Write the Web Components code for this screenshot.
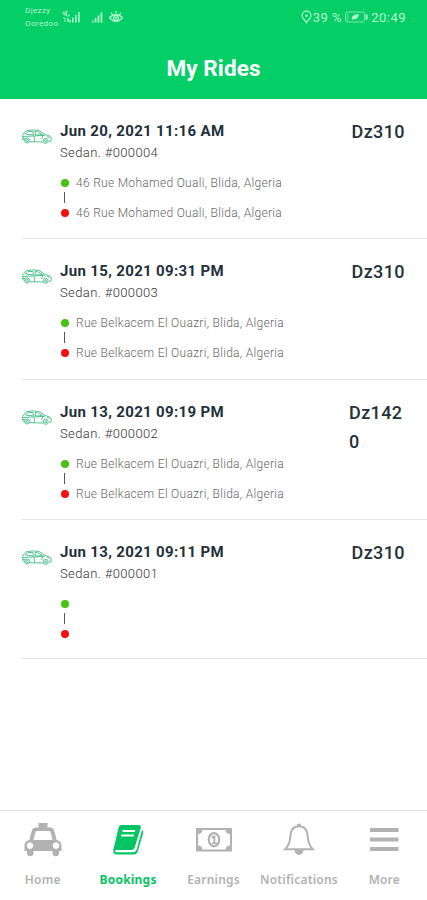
<!DOCTYPE html>
<html lang="en">
<head>
<meta charset="utf-8">
<title>My Rides</title>
<style>
  html, body { margin: 0; height: 100%; }
  body { background: #fff; font-family: Roboto, "Liberation Sans", sans-serif; }
</style>
</head>
<body>
<rides-app></rides-app>

<script>
function makeTemplate(html) {
  const template = document.createElement('template')
  template.innerHTML = html
  return template
}

const statusTemplate = makeTemplate(`
  <style>
    :host {
      display: flex;
      justify-content: space-between;
      height: 35px;
      box-sizing: border-box;
      padding: 4px 21px 0 25px;
      color: #b5f5ce;
    }
    .left, .right { display: flex; }
    .carriers { width: 36px; font-size: 8px; line-height: 13px; letter-spacing: 0.4px; white-space: nowrap; }
    .right { align-items: center; height: 26px; font-size: 13px; }
    .percent { margin-left: 1px; letter-spacing: 0.5px; }
    .time { letter-spacing: 0.5px; }
    .battery { margin: 0 3px 0 3px; }
    svg { display: block; }
  </style>
  <div class="left">
    <div class="carriers">Djezzy<br>Ooredoo</div>
    <svg width="64" height="26" viewBox="61 4 64 26" fill="currentColor">
      <path d="M63 11v3h3M65 11v5M68 11h-1.500v5H69v-2M63 18h2v4M67 18l2 4M69 18l-2 4" fill="none" stroke="currentColor" stroke-width=".8"/>
      <path d="M69 20h1.700v2.500H69zM72 17.500h1.700v5H72zM75 15h1.700v7.500H75zM78 12h1.700v10.500H78z" opacity=".9"/>
      <path d="M92 20.500h1.500v2H92zM94.700 18h1.700v4.500h-1.700zM97.500 15.500h1.800v7h-1.800zM100.500 12.500h1.800v10h-1.800z"/>
      <g fill="none" stroke="currentColor" stroke-width="1.200">
        <path d="M109.500 17.500Q116 11.500 122.500 17.500Q116 25.500 109.500 17.500zM111 12.500l1.300 2M116 11v2.500M121 12.500l-1.300 2"/>
        <circle cx="116" cy="18" r="2.300"/>
      </g>
      <circle cx="116" cy="18" r="1"/>
    </svg>
  </div>
  <div class="right">
    <svg width="11" height="14" viewBox="0 0 11 14" fill="none" stroke="currentColor" stroke-width="1.200">
      <path d="M5.500 12.500C4.500 10.500 1 8.500 1 5.700a4.500 4.500 0 0 1 9 0c0 2.800-3.500 4.800-4.500 6.800z"/>
      <circle cx="5.500" cy="5.700" r="1.200" fill="currentColor" stroke="none"/>
    </svg>
    <span class="percent">39 %</span>
    <svg class="battery" width="23" height="12" viewBox="0 0 23 12">
      <rect x=".6" y="1" width="18.800" height="10" rx="1.500" fill="none" stroke="currentColor" opacity=".7"/>
      <path d="M20.500 3.500h2v5h-2z" fill="currentColor"/>
      <path d="M2 2.500h1.500v7H2z" fill="currentColor" opacity=".4"/>
      <path d="M7 9c-1-4 2-5.500 7-6-.5 4-3 6-5.500 5z" fill="currentColor"/>
    </svg>
    <span class="time">20:49</span>
  </div>
`)

customElements.define('status-bar',

class extends HTMLElement {

  constructor () {
    super()
    this.attachShadow({ mode: 'open' })
    this.shadowRoot.appendChild(statusTemplate.content.cloneNode(true))
  }
})

const headerTemplate = makeTemplate(`
  <style>
    :host { display: block; height: 98.500px; background: #04ce66; color: #fff; }
    h1 {
      margin: 0;
      padding-top: 16px;
      font: 700 22.500px/34px Roboto, sans-serif;
      letter-spacing: 0.1px;
      text-align: center;
    }
  </style>
  <status-bar></status-bar>
  <h1><slot></slot></h1>
`)

customElements.define('app-header',

class extends HTMLElement {

  constructor () {
    super()
    this.attachShadow({ mode: 'open' })
    this.shadowRoot.appendChild(headerTemplate.content.cloneNode(true))
  }
})

const rideTemplate = makeTemplate(`
  <style>
    :host {
      display: flex;
      box-sizing: border-box;
      height: 140.500px;
      margin-left: 22px;
      padding: 21px 22px 0 0;
      border-bottom: 1px solid #e4e4e4;
    }
    .car { flex: none; margin-top: 9px; }
    .info { flex: 1; margin-left: 8px; min-width: 0; white-space: nowrap; }
    .date { font-size: 15px; line-height: 22px; font-weight: 700; color: #23303a; letter-spacing: 0.34px; }
    .car-type { font-size: 13px; line-height: 21px; font-weight: 300; color: #333; letter-spacing: 0.38px; }
    .route { margin-top: 12px; font-size: 12px; line-height: 16px; font-weight: 300; color: #666; letter-spacing: 0.3px; }
    .stop { display: flex; align-items: center; height: 16px; }
    .stop::before { content: ""; width: 8px; height: 8px; margin: 0 7px 0 1px; border-radius: 50%; background: #45c40c; }
    .stop.end::before { background: #fa0d0d; }
    .link { width: 1px; height: 11px; margin: 1px 0 2px 4px; background: #555; }
    .price {
      flex: none;
      max-width: 56px;
      margin-top: -3px;
      font-size: 18px;
      line-height: 29px;
      font-weight: 500;
      letter-spacing: 0.4px;
      color: #25303a;
      word-break: break-all;
    }
  </style>
  <svg class="car" width="30" height="15" viewBox="0 0 30 15" fill="none" stroke="#3fbd85" stroke-width=".9" stroke-linejoin="round">
    <path d="M3 12L.8 10.500.6 6.500 2.500 3.500 5 1.500Q11 .3 17 1.500L23 5.500Q29 6.500 29.300 9l-.3 3-2 .6M7.500 12.700L21 13"/>
    <path d="M3.500 5L6 2.500h5L11.500 6zM13 2.500l.5 3.500 7-.3-5-3zM1 7.500l10-.5 12-.7M12 7l.7 5.500M21 6l-1.500 4M25 7l2.500 1.500M1 9.500h2"/>
    <circle cx="5.200" cy="11.500" r="2.500"/><circle cx="5.200" cy="11.500" r="1"/>
    <circle cx="23.700" cy="11.800" r="2.500"/><circle cx="23.700" cy="11.800" r="1"/>
  </svg>
  <div class="info">
    <div class="date"><slot name="date"></slot></div>
    <div class="car-type"><slot name="car"></slot></div>
    <div class="route">
      <div class="stop"><slot name="from"></slot></div>
      <div class="link"></div>
      <div class="stop end"><slot name="to"></slot></div>
    </div>
  </div>
  <div class="price"><slot name="price"></slot></div>
`)

customElements.define('ride-item',

class extends HTMLElement {

  constructor () {
    super()
    this.attachShadow({ mode: 'open' })
    this.shadowRoot.appendChild(rideTemplate.content.cloneNode(true))
  }
})

const icons = {
  taxi: `<path fill-rule="evenodd" d="M15.500 0h9v4.500h3.200q2.500 0 3.300 2.500l2.700 10Q38.500 18 38.500 22.500V28h-2.500v2a3 3 0 0 1-6.500 0v-2h-19v2a3 3 0 0 1-6.500 0v-2H1.500v-5.500Q1.500 18 6.300 17L9 7q.8-2.500 3.300-2.500h3.200zM13.500 8q-.8 0-1 .9L10.300 17h19.400l-2.200-8.100q-.2-.9-1-.9zM7 19.300a3.300 3.300 0 1 0 .01 0zM33 19.300a3.300 3.300 0 1 0 .01 0z"/>`,
  book: `<path d="M13 2h17.500q3 0 2.200 3l-6 19.500q-.7 2.500-3.500 2.500H8.500q-1.500 0-1.500 1t1.500 1.200h16.300q3 0 4-3L34 7q1.800.8 1.200 3l-5.500 18.500q-.9 3-4 3H9.500Q4 31.500 5.500 26L10.500 5q.8-3 2.500-3z"/>
    <path d="M14.500 8h12.500M13.300 12.500h12.500" stroke="#fff" stroke-width="1.800"/>`,
  money: `<path fill-rule="evenodd" d="M2 5h36v23.500H2zM4 11v11.500q4 0 4.500 4h23q.5-4 4.500-4V11q-4 0-4.500-4h-23Q8 11 4 11z"/>
    <ellipse cx="20" cy="16.700" rx="5.200" ry="6.600" fill="none" stroke="currentColor" stroke-width="2.200"/>
    <path d="M19.500 12.500h1.800v7H23v1.700h-5.300v-1.700h1.700V15l-1.300.7-.8-1.500z"/>`,
  bell: `<path d="M20 3.300c6 0 8.300 4.500 8.600 9.500.4 7 2 10.500 5.200 13.400H6.200c3.200-2.900 4.800-6.400 5.200-13.400.3-5 2.600-9.500 8.600-9.500z" fill="none" stroke="currentColor" stroke-width="2"/>
    <path d="M18 3V1.500q2-2.200 4 0V3zM15.500 27h9a4.500 5 0 0 1-9 0z"/>`,
  menu: `<path d="M6 5h28.500v4H6zM6 14.500h28.500v4H6zM6 24h28.500v4H6z"/>`
}

const tabTemplate = makeTemplate(`
  <style>
    :host {
      display: flex;
      flex: 1 1 0;
      min-width: 0;
      flex-direction: column;
      align-items: center;
      color: #b2b2b2;
    }
    :host([active]) { color: #04c463; }
    svg { display: block; margin-top: 12px; }
    .label { margin-top: 14px; font: 600 12px/18px "Noto Sans", "Open Sans", sans-serif; letter-spacing: 0.2px; white-space: nowrap; }
    :host([active]) .label { font-weight: 700; }
  </style>
  <svg width="40" height="34" viewBox="0 0 40 34" fill="currentColor"></svg>
  <div class="label"><slot></slot></div>
`)

customElements.define('tab-item',

class extends HTMLElement {

  constructor () {
    super()
    this.attachShadow({ mode: 'open' })
    this.shadowRoot.appendChild(tabTemplate.content.cloneNode(true))
  }

  connectedCallback () {
    this.shadowRoot.querySelector('svg').innerHTML = icons[this.getAttribute('icon')]
  }
})

const appTemplate = makeTemplate(`
  <style>
    :host { display: flex; flex-direction: column; height: 100vh; overflow: hidden; }
    app-header { flex: none; }
    main { flex: 1; min-height: 0; }
    ride-item:last-child { height: 139px; }
    nav { flex: none; display: flex; box-sizing: border-box; height: 90px; border-top: 1px solid #e0e0e0; }
  </style>
  <app-header>My Rides</app-header>
  <main></main>
  <nav>
    <tab-item icon="taxi">Home</tab-item>
    <tab-item icon="book" active>Bookings</tab-item>
    <tab-item icon="money">Earnings</tab-item>
    <tab-item icon="bell">Notifications</tab-item>
    <tab-item icon="menu">More</tab-item>
  </nav>
`)

const rides = [
  { date: 'Jun 20, 2021 11:16 AM', car: 'Sedan. #000004', from: '46 Rue Mohamed Ouali, Blida, Algeria', to: '46 Rue Mohamed Ouali, Blida, Algeria', price: 'Dz310' },
  { date: 'Jun 15, 2021 09:31 PM', car: 'Sedan. #000003', from: 'Rue Belkacem El Ouazri, Blida, Algeria', to: 'Rue Belkacem El Ouazri, Blida, Algeria', price: 'Dz310' },
  { date: 'Jun 13, 2021 09:19 PM', car: 'Sedan. #000002', from: 'Rue Belkacem El Ouazri, Blida, Algeria', to: 'Rue Belkacem El Ouazri, Blida, Algeria', price: 'Dz1420' },
  { date: 'Jun 13, 2021 09:11 PM', car: 'Sedan. #000001', from: '', to: '', price: 'Dz310' }
]

customElements.define('rides-app',

class extends HTMLElement {

  constructor () {
    super()
    this.attachShadow({ mode: 'open' })
    this.shadowRoot.appendChild(appTemplate.content.cloneNode(true))
    this.list = this.shadowRoot.querySelector('main')
  }

  connectedCallback () {
    rides.forEach((ride) => this.addRide(ride))
  }

  addRide (ride) {
    const item = document.createElement('ride-item')
    Object.keys(ride).forEach((name) => {
      const span = document.createElement('span')
      span.slot = name
      span.textContent = ride[name]
      item.appendChild(span)
    })
    this.list.appendChild(item)
  }
})
</script>
</body>
</html>
